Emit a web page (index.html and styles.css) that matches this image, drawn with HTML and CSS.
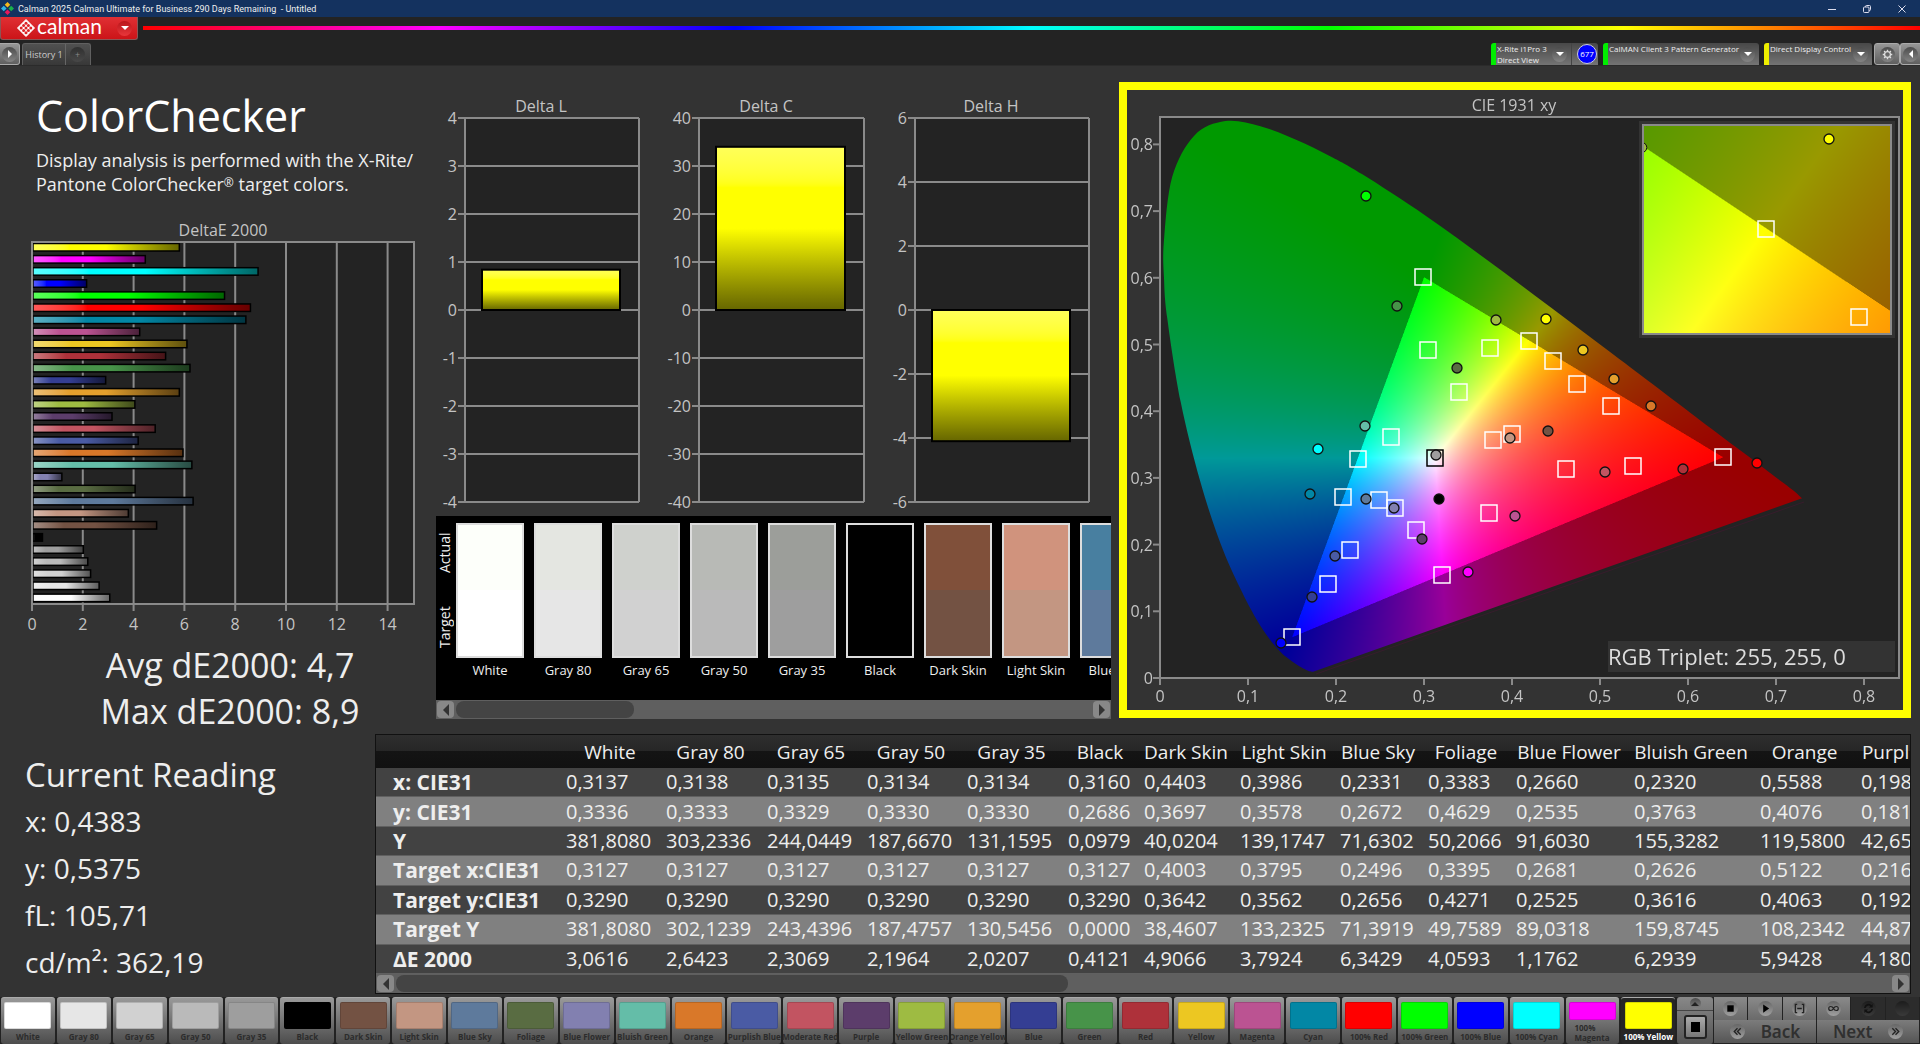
FILE: index.html
```html
<!DOCTYPE html>
<html lang="en">
<head>
  <meta charset="UTF-8" />
  <meta name="viewport" content="width=device-width, initial-scale=1.0" />
  <title>Calman 2025 - Untitled</title>
  <link rel="stylesheet" href="styles.css">
</head>
<body>
  <div class="titlebar">
    <svg class="app-icon" viewBox="0 0 14 14">
      <path d="M7 0l3 3-3 3-3-3z" fill="#f5b81c"/>
      <path d="M3 4l3 3-3 3-3-3z" fill="#2fb4e8"/>
      <path d="M11 4l3 3-3 3-3-3z" fill="#18b24b"/>
      <path d="M7 8l3 3-3 3-3-3z" fill="#e6185c"/>
    </svg>
    <span class="title">Calman 2025 Calman Ultimate for Business 290 Days Remaining&nbsp; - Untitled</span>
    <button class="win-btn" aria-label="Minimize"><svg viewBox="0 0 10 10"><path d="M1 5.5h8"/></svg></button>
    <button class="win-btn" aria-label="Restore"><svg viewBox="0 0 10 10"><rect x="1.5" y="3" width="5.5" height="5.5" rx="1"/><path d="M3.5 3V2.5a1 1 0 0 1 1-1h3a1 1 0 0 1 1 1v3a1 1 0 0 1-1 1H7"/></svg></button>
    <button class="win-btn" aria-label="Close"><svg viewBox="0 0 10 10"><path d="M1.5 1.5l7 7M8.5 1.5l-7 7"/></svg></button>
  </div>

  <header>
    <div class="brand-row">
      <button class="brand">
        <svg class="brand-icon" viewBox="0 0 18 18">
          <path d="M9 .5L17.5 9 9 17.5.5 9z" fill="#fff" stroke="#fff" stroke-linejoin="round"/>
          <g fill="#dc2226">
            <circle cx="9" cy="4.2" r="1.5"/><circle cx="6.6" cy="6.6" r="1.5"/><circle cx="11.4" cy="6.6" r="1.5"/>
            <circle cx="4.2" cy="9" r="1.5"/><circle cx="9" cy="9" r="1.5"/><circle cx="13.8" cy="9" r="1.5"/>
            <circle cx="6.6" cy="11.4" r="1.5"/><circle cx="11.4" cy="11.4" r="1.5"/><circle cx="9" cy="13.8" r="1.5"/>
          </g>
        </svg>
        <span class="brand-name">calman</span>
        <span class="knob red"><i class="arrow-down"></i></span>
      </button>
      <div class="rainbow"></div>
    </div>
    <div class="tab-row">
      <button class="side-btn left" aria-label="Show panel"><span class="knob"><i class="arrow-right"></i></span></button>
      <div class="history">
        <button class="history-tab">History 1</button>
        <button class="history-add" aria-label="Add history"><span class="knob dim">+</span></button>
      </div>
      <div class="devices">
        <div class="device meter">
          <button class="device-btn"><span>X-Rite i1Pro 3<br>Direct View</span><span class="knob"><i class="arrow-down"></i></span></button>
          <span class="badge">677</span>
        </div>
        <div class="device source">
          <button class="device-btn"><span>CalMAN Client 3 Pattern Generator</span><span class="knob"><i class="arrow-down"></i></span></button>
        </div>
        <div class="device display">
          <button class="device-btn"><span>Direct Display Control</span><span class="knob"><i class="arrow-down"></i></span></button>
        </div>
        <button class="side-btn gear" aria-label="Settings"><span class="knob"><svg viewBox="0 0 12 12"><circle cx="6" cy="6" r="3.2" fill="none" stroke="#ddd" stroke-width="1.4"/><path d="M6 .8v1.6M6 9.6v1.6M.8 6h1.6M9.6 6h1.6M2.3 2.3l1.1 1.1M8.6 8.6l1.1 1.1M2.3 9.7l1.1-1.1M8.6 3.4l1.1-1.1" stroke="#ddd" stroke-width="1.5"/></svg></span></button>
        <button class="side-btn right" aria-label="Hide panel"><span class="knob"><i class="arrow-left"></i></span></button>
      </div>
    </div>
  </header>

  <main>
    <div class="top">
      <section class="summary">
        <h1>ColorChecker</h1>
        <p class="intro">Display analysis is performed with the X-Rite/<br>Pantone ColorChecker<sup>®</sup> target colors.</p>
        <svg id="deltaE" class="chart" viewBox="0 222 436 414"></svg>
        <div class="averages">
          <div>Avg dE2000: 4,7</div>
          <div>Max dE2000: 8,9</div>
        </div>
      </section>

      <section class="deltas">
        <svg id="deltaLCH" class="chart" viewBox="436 82 683 434"></svg>
        <div class="strip">
          <div class="strip-side"><span>Target</span><span>Actual</span></div>
          <div class="strip-items" id="strip"></div>
        </div>
        <div class="scrollbar">
          <button aria-label="Scroll left"><i class="arrow-left"></i></button>
          <div class="track"><div class="thumb short"></div></div>
          <button aria-label="Scroll right"><i class="arrow-right"></i></button>
        </div>
      </section>

      <section class="cie">
        <canvas id="gamut" width="776" height="620"></canvas>
        <svg id="ciePlot" class="chart" viewBox="1127 90 776 620"></svg>
      </section>
    </div>

    <div class="bottom">
      <section class="reading">
        <h2>Current Reading</h2>
        <p>x: 0,4383</p>
        <p>y: 0,5375</p>
        <p>fL: 105,71</p>
        <p>cd/m²: 362,19</p>
      </section>
      <section class="data">
        <div class="table-wrap">
          <table id="table"></table>
        </div>
        <div class="scrollbar">
          <button aria-label="Scroll left"><i class="arrow-left"></i></button>
          <div class="track"><div class="thumb long"></div></div>
          <button aria-label="Scroll right"><i class="arrow-right"></i></button>
        </div>
      </section>
    </div>
  </main>

  <footer>
    <div class="patches" id="patches"></div>
    <div class="stack">
      <button class="stack-up" aria-label="Expand"><span class="knob"><i class="arrow-up"></i></span></button>
      <button class="stack-target" aria-label="Pattern"><i></i></button>
    </div>
    <div class="transport">
      <div class="transport-row">
        <button aria-label="Stop"><span class="knob"><svg viewBox="0 0 12 12"><path d="M2.5 2.5h7v7h-7z"/></svg></span></button>
        <button aria-label="Play"><span class="knob"><svg viewBox="0 0 12 12"><path d="M3.5 1.5l6.5 4.5-6.5 4.5z"/></svg></span></button>
        <button aria-label="Read series"><span class="knob"><svg viewBox="0 0 12 12"><path d="M3.5 1.5H1.5v9h2M8.5 1.5h2v9h-2M3.5 6h5" fill="none" stroke="#222" stroke-width="1.5"/></svg></span></button>
        <button aria-label="Continuous"><span class="knob"><svg viewBox="0 0 12 12"><path d="M6 6C5 4 4 3.8 3 3.8a2.2 2.2 0 0 0 0 4.4C4 8.2 5 8 6 6s2-2.2 3-2.2a2.2 2.2 0 0 1 0 4.4C8 8.2 7 8 6 6z" fill="none" stroke="#222" stroke-width="1.3"/></svg></span></button>
        <button class="off" aria-label="Refresh"><span class="knob dim"><svg viewBox="0 0 12 12"><path d="M2 5.5A4 4 0 0 1 9 3.2M10 6.5A4 4 0 0 1 3 8.8" fill="none" stroke="#111" stroke-width="1.8"/><path d="M10.5 1v4h-4zM1.5 11V7h4z" fill="#111"/></svg></span></button>
        <button class="off" aria-label="Record"><span class="knob dim"></span></button>
      </div>
      <div class="transport-row nav">
        <button><span class="knob"><svg viewBox="0 0 12 12"><path d="M6 2.5L2.5 6 6 9.5M9.5 2.5L6 6l3.5 3.5" fill="none" stroke="#222" stroke-width="1.5"/></svg></span>Back</button>
        <button>Next<span class="knob"><svg viewBox="0 0 12 12"><path d="M2.5 2.5L6 6 2.5 9.5M6 2.5L9.5 6 6 9.5" fill="none" stroke="#222" stroke-width="1.5"/></svg></span></button>
      </div>
    </div>
  </footer>

  <script src="script.js"></script>
</body>
</html>
```
FILE: styles.css
```css
* {
  box-sizing: border-box;
}

body {
  margin: 0;
  font-family: "Open Sans", "Noto Sans", sans-serif;
  background-color: #333;
  color: #eee;
  display: flex;
  flex-direction: column;
  min-height: 100vh;
}

button {
  font-family: inherit;
  border: none;
  padding: 0;
  margin: 0;
  background: none;
  color: inherit;
  cursor: pointer;
}

/* title bar */
.titlebar {
  height: 17px;
  background-color: #14325f;
  display: flex;
  align-items: center;
  padding-right: 6px;
}

.app-icon {
  width: 13px;
  height: 13px;
  margin: 0 4px 0 1px;
}

.title {
  flex: 1;
  font-family: Roboto, sans-serif;
  font-size: 9px;
  line-height: 16px;
}

.win-btn {
  width: 24px;
  height: 17px;
  margin-left: 11px;
}

.win-btn svg {
  width: 10px;
  height: 10px;
  display: block;
  margin: auto;
  fill: none;
  stroke: #dde;
}

/* header */
header {
  background-color: #232323;
  border-bottom: 1px solid #2b2b2b;
}

.brand-row {
  display: flex;
  height: 26px;
  align-items: flex-start;
}

.brand {
  display: flex;
  align-items: center;
  width: 138px;
  height: 23px;
  padding-left: 16px;
  background: linear-gradient(#e03034, #cc1418);
  border: 1px solid #8c5556;
  border-top: none;
  border-radius: 0 0 3px 3px;
}

.brand-icon {
  width: 18px;
  height: 18px;
  margin-right: 2px;
}

.brand-name {
  font-family: Lato, sans-serif;
  font-size: 21px;
  line-height: 18px;
  color: #fff;
  width: 80px;
  text-align: left;
  padding-bottom: 4px;
}

.rainbow {
  flex: 1;
  height: 4px;
  margin: 9px 0 0 5px;
  background: linear-gradient(to right, #f00, #f0f, #00f, #0ff, #0f0, #ff0, #f00);
}

.knob {
  display: flex;
  align-items: center;
  justify-content: center;
  flex: none;
  width: 15px;
  height: 15px;
  border-radius: 50%;
  background: linear-gradient(#4c4c4c, #848484);
}

.knob.red {
  background: linear-gradient(#b9161a, #e8373b);
}

.knob.dim {
  background: linear-gradient(#303030, #484848);
  color: #888;
}

.knob svg {
  width: 11px;
  height: 11px;
}

.arrow-down, .arrow-up, .arrow-left, .arrow-right {
  border: 4px solid transparent;
}

.arrow-down {
  border-top-color: #fff;
  border-bottom-width: 0;
}

.arrow-up {
  border-bottom-color: #222;
  border-top-width: 0;
}

.arrow-left {
  border-right-color: #fff;
  border-left-width: 0;
}

.arrow-right {
  border-left-color: #fff;
  border-right-width: 0;
}

.tab-row {
  display: flex;
  height: 22px;
}

.side-btn {
  display: flex;
  align-items: center;
  justify-content: center;
  width: 20px;
  height: 22px;
  background: linear-gradient(#979797, #5f5f5f);
  border: 1px solid #aaa;
  border-radius: 3px;
}

.side-btn.left {
  border-left: none;
  border-radius: 0 3px 3px 0;
}

.side-btn.gear {
  width: 26px;
}

.side-btn.right {
  border-right: none;
  border-radius: 3px 0 0 3px;
}

.history {
  display: flex;
  margin-left: 2px;
  background: linear-gradient(#505050, #383838);
  border: 1px solid #606060;
  border-bottom: none;
  border-radius: 3px 3px 0 0;
}

.history-tab {
  width: 43px;
  font-size: 9px;
  color: #ccc;
  border-right: 1px solid #666;
}

.history-add {
  width: 24px;
  padding-left: 4px;
  font-size: 9px;
}

.devices {
  display: flex;
  margin-left: auto;
}

.device {
  display: flex;
  align-items: center;
  margin-right: 5px;
  border-left: 5px solid #0e0;
  border-radius: 3px 3px 0 0;
  background: linear-gradient(#484848, #747474);
}

.device.meter {
  width: 107px;
}

.device.source {
  width: 156px;
}

.device.display {
  width: 108px;
  border-left-color: #ee0;
  margin-right: 2px;
}

.device-btn {
  display: flex;
  flex: 1;
  justify-content: space-between;
  align-items: center;
  height: 22px;
  padding: 0 4px 0 1px;
  font-size: 8px;
  line-height: 11px;
  text-align: left;
  white-space: nowrap;
  color: #eee;
}

.device-btn > span:first-child {
  align-self: flex-start;
}

.meter .device-btn {
  border-right: 1px solid #444;
}

.badge {
  width: 20px;
  height: 20px;
  margin: 0 1px 0 5px;
  border-radius: 50%;
  border: 1px solid #ccd;
  background-color: #00f;
  color: #fff;
  font-size: 8px;
  line-height: 18px;
  text-align: center;
}

/* main area */
main {
  flex: 1;
  padding-right: 9px;
}

.top {
  display: grid;
  grid-template-columns: minmax(0, 436fr) minmax(0, 683fr) minmax(0, 792fr);
  align-items: start;
  padding-top: 16px;
}

.chart {
  display: block;
  width: 100%;
  height: auto;
}

.summary h1 {
  margin: 2px 0 0 36px;
  font-size: 43px;
  line-height: 64px;
  font-weight: normal;
  color: #fff;
}

.intro {
  margin: 0 0 11px 36px;
  font-size: 18px;
  line-height: 24px;
  height: 63px;
  white-space: nowrap;
}

.intro sup {
  font-size: 12px;
  line-height: 0;
  vertical-align: 4px;
}

.chart text {
  font-size: 16px;
  fill: #c4c4c4;
}

.averages {
  width: 100%;
  padding: 6px 0 0 24px;
  text-align: center;
  font-size: 34px;
  line-height: 46px;
}

.strip {
  display: flex;
  margin-right: 8px;
  height: 184px;
  background-color: #000;
  overflow: hidden;
}

.strip-side {
  display: flex;
  flex: none;
  writing-mode: vertical-rl;
  transform: rotate(180deg);
  width: 20px;
  height: 148px;
  font-size: 14px;
  line-height: 18px;
  text-align: center;
}

.strip-side span {
  flex: 1;
}

.strip-items {
  display: flex;
  gap: 10px;
  padding-top: 7px;
}

.strip-item {
  flex: none;
  width: 68px;
  text-align: center;
  font-size: 13px;
  line-height: 24px;
  white-space: nowrap;
}

.strip-color {
  height: 135px;
  border: 2px solid #ddd;
}

.scrollbar {
  display: flex;
  height: 19px;
  padding: 1px;
  background-color: #5f5f5f;
}

.deltas .scrollbar {
  margin-right: 8px;
}

.scrollbar button {
  display: flex;
  align-items: center;
  justify-content: center;
  width: 17px;
  border-radius: 4px;
  background-color: #888;
}

.scrollbar .arrow-left {
  border-width: 6px 6px 6px 0;
  border-right-color: #333;
}

.scrollbar .arrow-right {
  border-width: 6px 0 6px 6px;
  border-left-color: #333;
}

.track {
  flex: 1;
  margin: 0 2px;
}

.thumb {
  height: 100%;
  border-radius: 8px;
  background-color: #444;
}

.thumb.short {
  width: 28%;
}

.thumb.long {
  width: 45%;
}

.cie {
  display: grid;
  border: 8px solid #ff0;
}

.cie canvas, .cie svg {
  grid-area: 1 / 1;
  width: 100%;
  height: auto;
}

.chart .triplet {
  font-size: 22px;
  fill: #ddd;
}

.bottom {
  display: flex;
}

.reading {
  flex: none;
  width: 375px;
  padding: 17px 0 0 25px;
}

.reading h2, .reading p {
  margin: 0;
  font-size: 28px;
  line-height: 47px;
  font-weight: normal;
}

.reading h2 {
  font-size: 33px;
}

.data {
  flex: 1;
  min-width: 0;
  border: 1px solid #111;
}

.table-wrap {
  overflow: hidden;
}

table {
  table-layout: fixed;
  border-collapse: collapse;
  width: 1610px;
  height: 239px;
  font-size: 20px;
  line-height: 28px;
  white-space: nowrap;
}

th, td {
  padding: 0 6px;
  text-align: left;
  overflow: hidden;
}

thead th {
  height: 33px;
  padding: 0;
  font-size: 19px;
  font-weight: normal;
  text-align: center;
  background: linear-gradient(#2e2e2e, #262626 50%, #141414 50%, #111);
}

tbody th {
  padding-left: 17px;
  font-size: 21px;
}

tbody tr {
  background-color: #424242;
  border-bottom: 1px solid #606060;
}

tbody tr:nth-child(even) {
  background-color: #808080;
}

/* bottom bar */
footer {
  display: flex;
  height: 47px;
  background-color: #222;
}

.patches {
  display: flex;
  width: 87.3%;
}

.patch {
  display: flex;
  flex-direction: column;
  align-items: center;
  flex: 1;
  min-width: 0;
  margin: 0 1px;
  padding: 4px 0 0;
  border-top: 1px solid #aaa;
  border-radius: 3px;
  background: linear-gradient(#999, #4c4c4c);
  font-size: 8px;
  line-height: 10px;
  font-weight: bold;
  color: #2c2c2c;
  white-space: nowrap;
  overflow: hidden;
}

.patch i {
  flex: 1;
  width: 47px;
  min-height: 18px;
  border-radius: 2px;
  border: 1px solid rgba(0, 0, 0, 0.15);
}

.patch span {
  padding: 3px 0 2px;
}

.patch.wrap span {
  white-space: normal;
  width: 36px;
  text-align: left;
}

.patch.active {
  background: #262626;
  color: #fff;
}

.stack {
  display: flex;
  flex-direction: column;
  width: 36px;
  margin: 0 1px;
  border-radius: 3px;
  background: linear-gradient(#888, #555);
}

.stack-up {
  display: flex;
  justify-content: center;
  align-items: center;
  height: 14px;
  border-bottom: 1px solid #444;
}

.stack-up .knob {
  width: 11px;
  height: 11px;
}

.stack-target {
  width: 23px;
  height: 24px;
  margin: 4px auto;
  padding: 5px;
  border: 2px solid #222;
  border-radius: 3px;
  background: linear-gradient(#aaa, #777);
}

.stack-target i {
  display: block;
  height: 10px;
  background-color: #000;
}

.transport {
  flex: 1;
}

.transport-row {
  display: flex;
  height: 23px;
}

.transport-row button {
  flex: 1;
  display: flex;
  align-items: center;
  justify-content: center;
  margin-right: 1px;
  background: linear-gradient(#8a8a8a, #6a6a6a);
}

.transport-row .off {
  background: #2c2c2c;
}

.transport .knob {
  background: linear-gradient(#666, #a0a0a0);
}

.transport .knob.dim {
  background: linear-gradient(#1c1c1c, #3a3a3a);
}

.transport .nav button {
  justify-content: space-evenly;
  font-family: "Noto Sans", sans-serif;
  font-size: 17px;
  line-height: 23px;
  font-weight: 600;
  color: #303030;
  background: linear-gradient(#7c7c7c, #555);
}
```
FILE: script.js
```js
// name, target colour, measured colour, deltaE
const patches = [
  ["White", "#ffffff", "#fdfffa", 3.0616],
  ["Gray 80", "#e6e6e6", "#e4e6e1", 2.6423],
  ["Gray 65", "#d1d1d1", "#cfd1cd", 2.3069],
  ["Gray 50", "#bababa", "#b8bab6", 2.1964],
  ["Gray 35", "#9e9e9e", "#9c9e9a", 2.0207],
  ["Black", "#000000", "#000000", 0.4121],
  ["Dark Skin", "#735243", "#80503a", 4.9066],
  ["Light Skin", "#c39682", "#d0937d", 3.7924],
  ["Blue Sky", "#5e7a9c", "#487fa0", 6.3429],
  ["Foliage", "#596c42", "#596c42", 4.0593],
  ["Blue Flower", "#8280b0", "#8280b0", 1.1762],
  ["Bluish Green", "#64bda8", "#64bda8", 6.2939],
  ["Orange", "#d97829", "#d97829", 5.9428],
  ["Purplish Blue", "#4a5ba4", "#4a5ba4", 4.18],
  ["Moderate Red", "#c25461", "#c25461", 4.85],
  ["Purple", "#5c3d6b", "#5c3d6b", 3.15],
  ["Yellow Green", "#9ebb42", "#9ebb42", 4.05],
  ["Orange Yellow", "#e4a02d", "#e4a02d", 5.8],
  ["Blue", "#343e93", "#343e93", 2.9],
  ["Green", "#479349", "#479349", 6.22],
  ["Red", "#ae313a", "#ae313a", 5.26],
  ["Yellow", "#ecc722", "#ecc722", 6.1],
  ["Magenta", "#bb5392", "#bb5392", 4.24],
  ["Cyan", "#0287a5", "#0287a5", 8.42],
  ["100% Red", "#ff0000", "#ff0000", 8.6],
  ["100% Green", "#00ff00", "#00ff00", 7.58],
  ["100% Blue", "#0000ff", "#0000ff", 2.15],
  ["100% Cyan", "#00ffff", "#00ffff", 8.9],
  ["100% Magenta", "#ff00ff", "#ff00ff", 4.46],
  ["100% Yellow", "#ffff00", "#ffff00", 5.8]
];

const rect = (x, y, w, h, rest) => `<rect x="${x}" y="${y}" width="${w}" height="${h}" ${rest}/>`;
const line = (x1, y1, x2, y2, c = "#8a8a8a") => `<path d="M${x1} ${y1}L${x2} ${y2}" stroke="${c}" stroke-width="2"/>`;
const text = (x, y, s, anchor = "middle", cls = "") => `<text x="${x}" y="${y}" text-anchor="${anchor}" class="${cls}">${s}</text>`;

function barGradient(id, color, vertical) {
  const dir = vertical ? 'x2="0" y2="1"' : 'x2="1" y2="0"';
  return `<linearGradient id="${id}" x1="0" y1="0" ${dir}>
    <stop offset="0" stop-color="color-mix(in srgb, ${color} 65%, white)"/>
    <stop offset=".25" stop-color="${color}"/><stop offset=".5" stop-color="${color}"/>
    <stop offset="1" stop-color="color-mix(in srgb, ${color} 40%, black)"/></linearGradient>`;
}

function drawDeltaE() {
  const x0 = 32, y0 = 242, w = 382, h = 362, unit = 25.4;
  let out = text(223, 236, "DeltaE 2000") + rect(x0, y0, w, h, 'fill="#232323"');
  for (let v = 0; v <= 14; v += 2) {
    out += line(x0 + v * unit, y0, x0 + v * unit, y0 + h + 7) + text(x0 + v * unit, 630, v);
  }
  [...patches].reverse().forEach((p, i) => {
    out += barGradient("bar" + i, p[1], false);
    out += rect(x0 + 1, 243.5 + i * 12.09, p[3] * unit - 1, 7.5, `fill="url(#bar${i})" stroke="#000" stroke-width="1.5"`);
  });
  out += rect(x0, y0, w, h, 'fill="none" stroke="#8a8a8a" stroke-width="2"');
  document.getElementById("deltaE").innerHTML = out;
}

function drawDelta(title, tx, x0, x1, max, step, value) {
  const top = 118, bottom = 502, zero = (top + bottom) / 2;
  const scale = (bottom - top) / 2 / max;
  let out = text(tx, 112, title) + rect(x0, top, x1 - x0, bottom - top, 'fill="#232323"');
  for (let v = max; v >= -max; v -= step) {
    const y = zero - v * scale;
    out += line(x0 - 7, y, x1, y) + text(x0 - 8, y + 6, v, "end");
  }
  out += line(x0, top, x0, bottom) + line(x1, top, x1, bottom);
  const y = value > 0 ? zero - value * scale : zero;
  out += rect(x0 + 17, y, x1 - x0 - 36, Math.abs(value) * scale, 'fill="url(#yellow)" stroke="#000" stroke-width="2"');
  return out;
}

function drawDeltas() {
  document.getElementById("deltaLCH").innerHTML = barGradient("yellow", "#ffff00", true) +
    drawDelta("Delta L", 541, 465, 639, 4, 1, 0.84) +
    drawDelta("Delta C", 766, 699, 864, 40, 10, 34) +
    drawDelta("Delta H", 991, 915, 1089, 6, 2, -4.1);
}

// spectral locus, 380 - 700 nm
const locus = [
  [.1741, .008], [.1726, .008], [.1689, .009], [.1644, .0119], [.1566, .0177], [.144, .0297], [.1355, .0399],
  [.1241, .0578], [.1096, .0868], [.0913, .1327], [.0687, .2007], [.0454, .295], [.0235, .4127], [.0082, .5384],
  [.0045, .6], [.0045, .6548], [.0139, .7502], [.0389, .812], [.0743, .8338], [.1142, .8262], [.1547, .8059], [.1929, .7816],
  [.2296, .7543], [.3016, .6923], [.3731, .6245], [.4441, .5547], [.5125, .4866], [.5752, .4242], [.627, .3725],
  [.6658, .334], [.6915, .3083], [.719, .2809], [.73, .268]
];

const toX = x => 33 + x * 879.5;
const toY = y => 587 - y * 666.7;

function xyColor(x, y) {
  const X = x / y, Z = (1 - x - y) / y;
  let rgb = [
    3.2406 * X - 1.5372 - 0.4986 * Z,
    -0.9689 * X + 1.8758 + 0.0415 * Z,
    0.0557 * X - 0.204 + 1.057 * Z
  ];
  const inside = Math.min(...rgb) >= 0;
  const max = Math.max(...rgb);
  return rgb.map(c => Math.max(0, c) / max * (inside ? 255 : 153));
}

function shade(w, h, fromPixel) {
  const c = document.createElement("canvas");
  c.width = w * 2;
  c.height = h * 2;
  const ctx = c.getContext("2d");
  const img = ctx.createImageData(c.width, c.height);
  for (let j = 0, k = 0; j < c.height; j++) {
    for (let i = 0; i < c.width; i++, k += 4) {
      const [x, y] = fromPixel(i / 2, j / 2);
      const rgb = xyColor(x, Math.max(y, .001));
      img.data[k] = rgb[0];
      img.data[k + 1] = rgb[1];
      img.data[k + 2] = rgb[2];
      img.data[k + 3] = 255;
    }
  }
  ctx.putImageData(img, 0, 0);
  return c;
}

function drawGamut() {
  const ctx = document.getElementById("gamut").getContext("2d");
  ctx.fillStyle = "#232323";
  ctx.fillRect(33, 27, 738, 560);
  ctx.save();
  // smooth curve through the locus points
  ctx.beginPath();
  const p = locus.map(([x, y]) => [toX(x), toY(y)]);
  ctx.moveTo(...p[0]);
  for (let i = 0; i < p.length - 1; i++) {
    const a = p[i - 1] || p[i], b = p[i], c = p[i + 1], d = p[i + 2] || c;
    ctx.bezierCurveTo(b[0] + (c[0] - a[0]) / 6, b[1] + (c[1] - a[1]) / 6, c[0] - (d[0] - b[0]) / 6, c[1] - (d[1] - b[1]) / 6, c[0], c[1]);
  }
  ctx.closePath();
  ctx.clip();
  ctx.drawImage(shade(776, 620, (i, j) => [(i - 33) / 879.5, (587 - j) / 666.7]), 0, 0, 776, 620);
  ctx.restore();
  ctx.strokeStyle = "#371c2c";
  ctx.beginPath();
  ctx.moveTo(189, 584);
  ctx.lineTo(677, 412);
  ctx.stroke();

  // close-up of the selected colour
  ctx.fillStyle = "#333";
  ctx.fillRect(512, 31, 256, 217);
  ctx.drawImage(shade(248, 210, (i, j) => [.4193 + (i - 123) / 3333, .5053 - (j - 104) / 2795]), 516, 34, 248, 210);
}

const targets = [
  [1423, 277], [1428, 350], [1490, 348], [1529, 341], [1459, 392], [1553, 361], [1577, 384], [1611, 406],
  [1391, 437], [1358, 459], [1493, 440], [1512, 434], [1566, 469], [1633, 466], [1723, 457], [1343, 497],
  [1379, 500], [1395, 508], [1416, 530], [1489, 513], [1350, 550], [1328, 584], [1292, 637], [1442, 575]
];

const measured = [
  [1366, 196, "#00ff00"], [1397, 306, "#479349"], [1496, 320, "#9ebb42"], [1457, 368, "#596c42"],
  [1546, 319, "#ffff00"], [1583, 350, "#ecc722"], [1614, 379, "#e4a02d"], [1651, 406, "#d97829"],
  [1365, 426, "#64bda8"], [1318, 449, "#00ffff"], [1436, 455, "#9e9e9e"], [1510, 438, "#c39682"],
  [1548, 431, "#735243"], [1310, 494, "#0287a5"], [1366, 499, "#5e7a9c"], [1394, 508, "#8280b0"],
  [1439, 499, "#000000"], [1422, 539, "#5c3d6b"], [1335, 556, "#4a5ba4"], [1312, 597, "#343e93"],
  [1281, 643, "#0000ff"], [1468, 572, "#ff00ff"], [1515, 516, "#bb5392"], [1605, 472, "#c25461"],
  [1683, 469, "#ae313a"], [1757, 463, "#ff0000"]
];

const square = (x, y, c = "#fff") => rect(x - 8, y - 8, 16, 16, `fill="none" stroke="${c}" stroke-width="1.5"`);
const dot = (x, y, c) => `<circle cx="${x}" cy="${y}" r="5" fill="${c}" stroke="#111" stroke-width="1.3"/>`;

function drawCie() {
  let out = text(1514, 111, "CIE 1931 xy");
  for (let i = 0; i <= 8; i++) {
    const label = i ? "0," + i : "0";
    const x = 1160 + i * 88, y = 678 - i * 66.7;
    out += line(x, 678, x, 685) + text(x, 702, label);
    out += line(1153, y, 1160, y) + text(1153, y + 6, label, "end");
  }
  out += rect(1160, 117, 739, 561, 'fill="none" stroke="#8a8a8a" stroke-width="2"');
  targets.forEach(t => out += square(t[0], t[1]));
  out += square(1435, 458, "#000");
  measured.forEach(m => out += dot(...m));
  out += rect(1643, 125, 248, 209, 'fill="none" stroke="#8a8a8a" stroke-width="2"');
  out += square(1766, 229) + square(1859, 317) + dot(1829, 139, "#ffff00");
  out += '<path d="M1644 143a5 5 0 0 1 0 9" fill="#9ebb42" stroke="#111"/>';
  out += rect(1608, 641, 287, 31, 'fill="#333"') + text(1608, 665, "RGB Triplet: 255, 255, 0", "start", "triplet");
  document.getElementById("ciePlot").innerHTML = out;
}

const columns = [184, 100, 101, 100, 100, 101, 76, 96, 100, 88, 88, 118, 126, 101, 131];
const rows = [
  ["x: CIE31", "0,3137", "0,3138", "0,3135", "0,3134", "0,3134", "0,3160", "0,4403", "0,3986", "0,2331", "0,3383", "0,2660", "0,2320", "0,5588", "0,1987"],
  ["y: CIE31", "0,3336", "0,3333", "0,3329", "0,3330", "0,3330", "0,2686", "0,3697", "0,3578", "0,2672", "0,4629", "0,2535", "0,3763", "0,4076", "0,1817"],
  ["Y", "381,8080", "303,2336", "244,0449", "187,6670", "131,1595", "0,0979", "40,0204", "139,1747", "71,6302", "50,2066", "91,6030", "155,3282", "119,5800", "42,6500"],
  ["Target x:CIE31", "0,3127", "0,3127", "0,3127", "0,3127", "0,3127", "0,3127", "0,4003", "0,3795", "0,2496", "0,3395", "0,2681", "0,2626", "0,5122", "0,2160"],
  ["Target y:CIE31", "0,3290", "0,3290", "0,3290", "0,3290", "0,3290", "0,3290", "0,3642", "0,3562", "0,2656", "0,4271", "0,2525", "0,3616", "0,4063", "0,1920"],
  ["Target Y", "381,8080", "302,1239", "243,4396", "187,4757", "130,5456", "0,0000", "38,4607", "133,2325", "71,3919", "49,7589", "89,0318", "159,8745", "108,2342", "44,8700"],
  ["ΔE 2000", "3,0616", "2,6423", "2,3069", "2,1964", "2,0207", "0,4121", "4,9066", "3,7924", "6,3429", "4,0593", "1,1762", "6,2939", "5,9428", "4,1800"]
];

function renderTable() {
  const names = patches.slice(0, 14).map(p => `<th scope="col">${p[0]}</th>`).join("");
  document.getElementById("table").innerHTML =
    `<colgroup>${columns.map(w => `<col style="width:${w}px">`).join("")}</colgroup>` +
    `<thead><tr><th></th>${names}</tr></thead><tbody>` +
    rows.map(r => `<tr><th scope="row">${r[0]}</th>${r.slice(1).map(v => `<td>${v}</td>`).join("")}</tr>`).join("") +
    "</tbody>";
}

function renderPatches() {
  document.getElementById("strip").innerHTML = patches.slice(0, 9).map(p => `
    <div class="strip-item">
      <div class="strip-color" style="background:linear-gradient(${p[2]} 50%, ${p[1]} 50%)"></div>
      ${p[0]}
    </div>`).join("");

  document.getElementById("patches").innerHTML = patches.map(p => {
    const cls = p[0] === "100% Yellow" ? " active" : p[0] === "100% Magenta" ? " wrap" : "";
    return `<button class="patch${cls}"><i style="background:${p[1]}"></i><span>${p[0]}</span></button>`;
  }).join("");
}

drawDeltaE();
drawDeltas();
drawGamut();
drawCie();
renderTable();
renderPatches();
```
